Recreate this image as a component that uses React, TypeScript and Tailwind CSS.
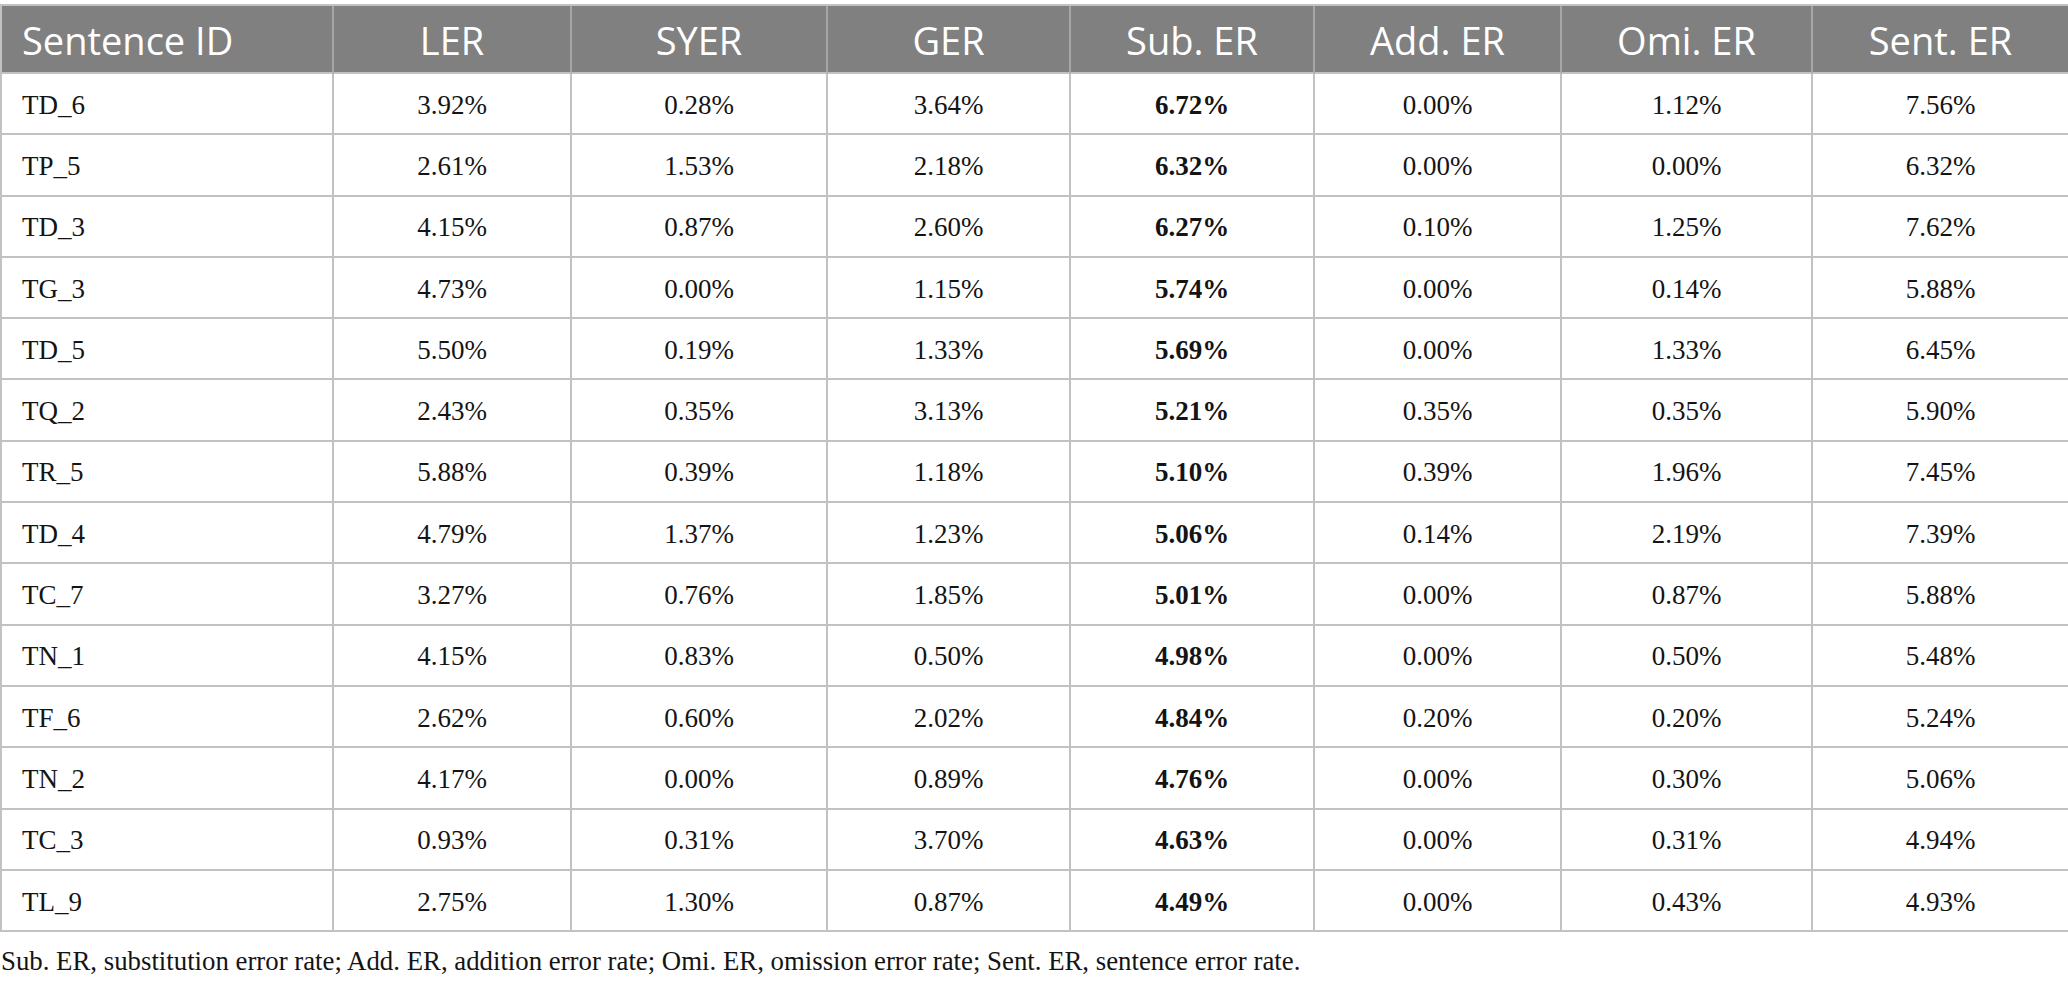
import React from "react";

const rows: string[][] = [
  ["TD_6", "3.92%", "0.28%", "3.64%", "6.72%", "0.00%", "1.12%", "7.56%"],
  ["TP_5", "2.61%", "1.53%", "2.18%", "6.32%", "0.00%", "0.00%", "6.32%"],
  ["TD_3", "4.15%", "0.87%", "2.60%", "6.27%", "0.10%", "1.25%", "7.62%"],
  ["TG_3", "4.73%", "0.00%", "1.15%", "5.74%", "0.00%", "0.14%", "5.88%"],
  ["TD_5", "5.50%", "0.19%", "1.33%", "5.69%", "0.00%", "1.33%", "6.45%"],
  ["TQ_2", "2.43%", "0.35%", "3.13%", "5.21%", "0.35%", "0.35%", "5.90%"],
  ["TR_5", "5.88%", "0.39%", "1.18%", "5.10%", "0.39%", "1.96%", "7.45%"],
  ["TD_4", "4.79%", "1.37%", "1.23%", "5.06%", "0.14%", "2.19%", "7.39%"],
  ["TC_7", "3.27%", "0.76%", "1.85%", "5.01%", "0.00%", "0.87%", "5.88%"],
  ["TN_1", "4.15%", "0.83%", "0.50%", "4.98%", "0.00%", "0.50%", "5.48%"],
  ["TF_6", "2.62%", "0.60%", "2.02%", "4.84%", "0.20%", "0.20%", "5.24%"],
  ["TN_2", "4.17%", "0.00%", "0.89%", "4.76%", "0.00%", "0.30%", "5.06%"],
  ["TC_3", "0.93%", "0.31%", "3.70%", "4.63%", "0.00%", "0.31%", "4.94%"],
  ["TL_9", "2.75%", "1.30%", "0.87%", "4.49%", "0.00%", "0.43%", "4.93%"],
];

const headers = ["Sentence ID", "LER", "SYER", "GER", "Sub. ER", "Add. ER", "Omi. ER", "Sent. ER"];

export default function App() {
  return (
    <div className="w-[2068px] h-[984px] bg-white overflow-hidden pt-[4px]">
      <div className="grid grid-cols-[332px_238px_256px_243px_244px_247px_251px_257px] border-t-2 border-l-2 border-[#c2c2c2]">
        {headers.map((h, i) => (
          <div
            key={h}
            className={`h-[68px] bg-[#808080] text-white text-[38px] font-['Open_Sans',sans-serif] flex items-center border-r-2 border-b-2 ${
              i === 7 ? "border-r-[#c2c2c2]" : "border-r-[#a6a6a6]"
            } border-b-[#c2c2c2] ${i === 0 ? "pl-[20px] justify-start" : "justify-center"}`}
          >
            <span className="leading-none pt-[2px]">{h}</span>
          </div>
        ))}
        {rows.map((r) =>
          r.map((c, j) => (
            <div
              key={r[0] + j}
              className={`h-[61.3px] border-r-2 border-b-2 border-[#c2c2c2] flex items-center text-[27px] text-[#141414] font-['Liberation_Serif',serif] ${
                j === 0 ? "pl-[20px] justify-start" : "justify-center"
              } ${j === 4 ? "font-bold" : ""}`}
            >
              <span className="leading-none pt-[3px]">{c}</span>
            </div>
          ))
        )}
      </div>
      <div className="mt-[16px] text-[26.8px] leading-none text-[#141414] font-['Liberation_Serif',serif] pl-[1px]">
        Sub. ER, substitution error rate; Add. ER, addition error rate; Omi. ER, omission error rate; Sent. ER, sentence error rate.
      </div>
    </div>
  );
}
